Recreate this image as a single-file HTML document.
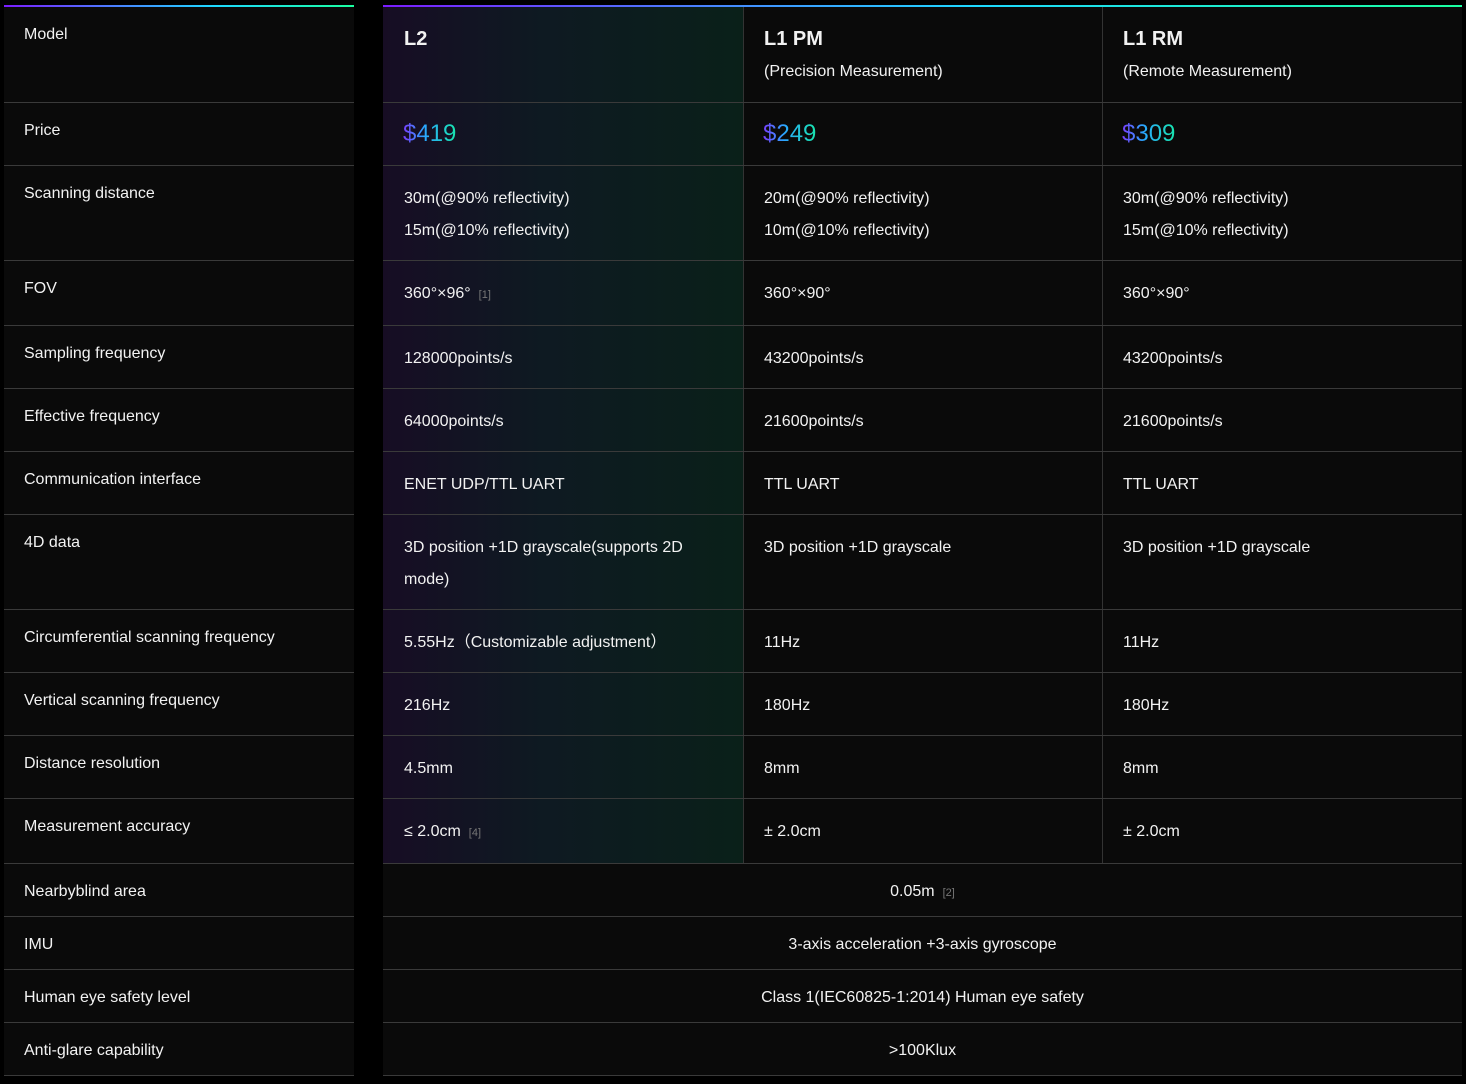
<!DOCTYPE html>
<html><head><meta charset="utf-8">
<style>
*{margin:0;padding:0;box-sizing:border-box}
body{width:1466px;height:1084px;background:#000;position:relative;overflow:hidden;font-family:"Liberation Sans",sans-serif;color:#f2f2f2;font-size:16px}
.bar{position:absolute;top:5px;height:2px}
.panel{position:absolute;background:#0a0a0a}
.hl{position:absolute;height:1px;background:#3a3a3a}
.vl{position:absolute;width:1px;background:#333}
.t{position:absolute;white-space:nowrap;line-height:20px}
.g{position:absolute;left:383px;width:360px;top:7px;height:856px;background:linear-gradient(90deg,#170d24 0%,#0e1a22 45%,#0a2019 100%)}
.h{font-weight:bold;font-size:20px}
.p{font-size:24px;line-height:28px;background:linear-gradient(90deg,#7b3cff 0%,#2aa6ff 40%,#18e6b0 100%);-webkit-background-clip:text;background-clip:text;color:transparent}
.n{color:#777;font-size:11px;margin-left:8px}
.c{text-align:center;left:383px;width:1079px}
</style></head><body>
<div class="bar" style="left:4px;width:350px;background:linear-gradient(90deg,#7b1cff,#1dd9ff 60%,#1affa0)"></div>
<div class="bar" style="left:383px;width:1079px;background:linear-gradient(90deg,#7b1cff,#1dd9ff 55%,#1affa0)"></div>
<div class="panel" style="left:4px;top:7px;width:350px;height:1069px"></div>
<div class="panel" style="left:383px;top:7px;width:1079px;height:1069px"></div>
<div class="g"></div>
<div class="vl" style="left:743px;top:7px;height:856px"></div>
<div class="vl" style="left:1102px;top:7px;height:856px"></div>

<div class="hl" style="left:4px;width:350px;top:102px"></div><div class="hl" style="left:383px;width:1079px;top:102px"></div>
<div class="hl" style="left:4px;width:350px;top:165px"></div><div class="hl" style="left:383px;width:1079px;top:165px"></div>
<div class="hl" style="left:4px;width:350px;top:260px"></div><div class="hl" style="left:383px;width:1079px;top:260px"></div>
<div class="hl" style="left:4px;width:350px;top:325px"></div><div class="hl" style="left:383px;width:1079px;top:325px"></div>
<div class="hl" style="left:4px;width:350px;top:388px"></div><div class="hl" style="left:383px;width:1079px;top:388px"></div>
<div class="hl" style="left:4px;width:350px;top:451px"></div><div class="hl" style="left:383px;width:1079px;top:451px"></div>
<div class="hl" style="left:4px;width:350px;top:514px"></div><div class="hl" style="left:383px;width:1079px;top:514px"></div>
<div class="hl" style="left:4px;width:350px;top:609px"></div><div class="hl" style="left:383px;width:1079px;top:609px"></div>
<div class="hl" style="left:4px;width:350px;top:672px"></div><div class="hl" style="left:383px;width:1079px;top:672px"></div>
<div class="hl" style="left:4px;width:350px;top:735px"></div><div class="hl" style="left:383px;width:1079px;top:735px"></div>
<div class="hl" style="left:4px;width:350px;top:798px"></div><div class="hl" style="left:383px;width:1079px;top:798px"></div>
<div class="hl" style="left:4px;width:350px;top:863px"></div><div class="hl" style="left:383px;width:1079px;top:863px"></div>
<div class="hl" style="left:4px;width:350px;top:916px"></div><div class="hl" style="left:383px;width:1079px;top:916px"></div>
<div class="hl" style="left:4px;width:350px;top:969px"></div><div class="hl" style="left:383px;width:1079px;top:969px"></div>
<div class="hl" style="left:4px;width:350px;top:1022px"></div><div class="hl" style="left:383px;width:1079px;top:1022px"></div>
<div class="hl" style="left:4px;width:350px;top:1075px"></div><div class="hl" style="left:383px;width:1079px;top:1075px"></div>

<div class="t" style="left:24px;top:25px">Model</div>
<div class="t" style="left:24px;top:121px">Price</div>
<div class="t" style="left:24px;top:184px">Scanning distance</div>
<div class="t" style="left:24px;top:279px">FOV</div>
<div class="t" style="left:24px;top:344px">Sampling frequency</div>
<div class="t" style="left:24px;top:407px">Effective frequency</div>
<div class="t" style="left:24px;top:470px">Communication interface</div>
<div class="t" style="left:24px;top:533px">4D data</div>
<div class="t" style="left:24px;top:628px">Circumferential scanning frequency</div>
<div class="t" style="left:24px;top:691px">Vertical scanning frequency</div>
<div class="t" style="left:24px;top:754px">Distance resolution</div>
<div class="t" style="left:24px;top:817px">Measurement accuracy</div>
<div class="t" style="left:24px;top:882px">Nearbyblind area</div>
<div class="t" style="left:24px;top:935px">IMU</div>
<div class="t" style="left:24px;top:988px">Human eye safety level</div>
<div class="t" style="left:24px;top:1041px">Anti-glare capability</div>

<div class="t h" style="left:404px;top:29px">L2</div>
<div class="t h" style="left:764px;top:29px">L1 PM</div>
<div class="t" style="left:764px;top:62px">(Precision Measurement)</div>
<div class="t h" style="left:1123px;top:29px">L1 RM</div>
<div class="t" style="left:1123px;top:62px">(Remote Measurement)</div>

<div class="t p" style="left:403px;top:120px">$419</div>
<div class="t p" style="left:763px;top:120px">$249</div>
<div class="t p" style="left:1122px;top:120px">$309</div>

<div class="t" style="left:404px;top:183px;line-height:32px">30m(@90% reflectivity)<br>15m(@10% reflectivity)</div>
<div class="t" style="left:764px;top:183px;line-height:32px">20m(@90% reflectivity)<br>10m(@10% reflectivity)</div>
<div class="t" style="left:1123px;top:183px;line-height:32px">30m(@90% reflectivity)<br>15m(@10% reflectivity)</div>

<div class="t" style="left:404px;top:284px">360°×96°<span class="n">[1]</span></div>
<div class="t" style="left:764px;top:284px">360°×90°</div>
<div class="t" style="left:1123px;top:284px">360°×90°</div>

<div class="t" style="left:404px;top:349px">128000points/s</div>
<div class="t" style="left:764px;top:349px">43200points/s</div>
<div class="t" style="left:1123px;top:349px">43200points/s</div>

<div class="t" style="left:404px;top:412px">64000points/s</div>
<div class="t" style="left:764px;top:412px">21600points/s</div>
<div class="t" style="left:1123px;top:412px">21600points/s</div>

<div class="t" style="left:404px;top:475px">ENET UDP/TTL UART</div>
<div class="t" style="left:764px;top:475px">TTL UART</div>
<div class="t" style="left:1123px;top:475px">TTL UART</div>

<div class="t" style="left:404px;top:532px;line-height:32px">3D position +1D grayscale(supports 2D<br>mode)</div>
<div class="t" style="left:764px;top:538px">3D position +1D grayscale</div>
<div class="t" style="left:1123px;top:538px">3D position +1D grayscale</div>

<div class="t" style="left:404px;top:633px">5.55Hz（Customizable adjustment）</div>
<div class="t" style="left:764px;top:633px">11Hz</div>
<div class="t" style="left:1123px;top:633px">11Hz</div>

<div class="t" style="left:404px;top:696px">216Hz</div>
<div class="t" style="left:764px;top:696px">180Hz</div>
<div class="t" style="left:1123px;top:696px">180Hz</div>

<div class="t" style="left:404px;top:759px">4.5mm</div>
<div class="t" style="left:764px;top:759px">8mm</div>
<div class="t" style="left:1123px;top:759px">8mm</div>

<div class="t" style="left:404px;top:822px">≤ 2.0cm<span class="n">[4]</span></div>
<div class="t" style="left:764px;top:822px">± 2.0cm</div>
<div class="t" style="left:1123px;top:822px">± 2.0cm</div>

<div class="t c" style="top:882px">0.05m<span class="n">[2]</span></div>
<div class="t c" style="top:935px">3-axis acceleration +3-axis gyroscope</div>
<div class="t c" style="top:988px">Class 1(IEC60825-1:2014) Human eye safety</div>
<div class="t c" style="top:1041px">&gt;100Klux</div>
</body></html>
